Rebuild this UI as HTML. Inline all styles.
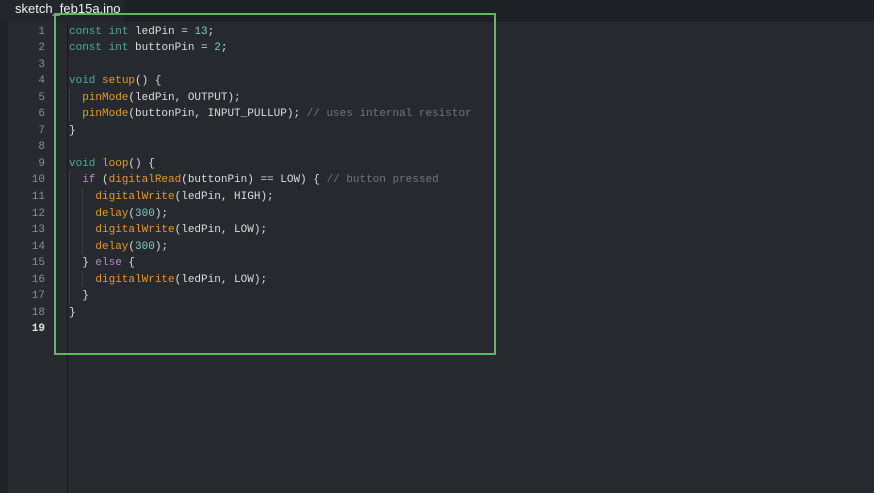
<!DOCTYPE html>
<html><head><meta charset="utf-8"><style>
html,body{margin:0;padding:0;width:874px;height:493px;overflow:hidden;background:#262a2e;}
.top{position:absolute;left:0;top:0;width:874px;height:22px;background:#1d2024;}
.tab{position:absolute;left:0;top:0;width:124px;height:22px;background:#23272b;color:#f0f0f0;font:13px "Liberation Sans",sans-serif;line-height:18px;padding-left:15px;box-sizing:border-box;}
.strip{position:absolute;left:0;top:22px;width:8px;height:471px;background:#202427;}
.gutter{position:absolute;left:8px;top:22px;width:59px;height:471px;background:#272b2f;}
.div{position:absolute;left:67px;top:22px;width:1px;height:471px;background:#17191c;}
.nums{position:absolute;left:8px;top:23px;width:37px;text-align:right;font:11px "Liberation Mono",monospace;color:#8a8f95;}
.code{position:absolute;left:69px;top:23px;font:11px "Liberation Mono",monospace;color:#dcdcdc;}
.l{height:16.55px;line-height:16.55px;white-space:pre;}
.nums .l:first-child,.code .l:first-child{margin-top:0.5px}
.k{color:#4fa8a3}.f{color:#e8972b}.n{color:#7fcbc4}.p{color:#b88ac4}.c{color:#6f767d}
.box{position:absolute;left:54px;top:13px;width:442px;height:342px;border:2.5px solid #5fb760;box-sizing:border-box;}
.guide{position:absolute;width:1px;background:#3a3f44;}
</style></head><body>
<div class="top"></div><div class="tab">sketch_feb15a.ino</div>
<div class="strip"></div><div class="gutter"></div><div class="div"></div>
<div class="guide" style="left:69px;top:89px;height:33px"></div>
<div class="guide" style="left:69px;top:171px;height:133px"></div>
<div class="guide" style="left:82px;top:188px;height:66px"></div>
<div class="guide" style="left:82px;top:271px;height:16px"></div>
<div class="nums"><div class="l">1</div><div class="l">2</div><div class="l">3</div><div class="l">4</div><div class="l">5</div><div class="l">6</div><div class="l">7</div><div class="l">8</div><div class="l">9</div><div class="l">10</div><div class="l">11</div><div class="l">12</div><div class="l">13</div><div class="l">14</div><div class="l">15</div><div class="l">16</div><div class="l">17</div><div class="l">18</div><div class="l" style="color:#e0e0e0;font-weight:bold">19</div></div>
<div class="code"><div class="l"><span class="k">const</span> <span class="k">int</span> ledPin = <span class="n">13</span>;</div><div class="l"><span class="k">const</span> <span class="k">int</span> buttonPin = <span class="n">2</span>;</div><div class="l"> </div><div class="l"><span class="k">void</span> <span class="f">setup</span>() {</div><div class="l">  <span class="f">pinMode</span>(ledPin, OUTPUT);</div><div class="l">  <span class="f">pinMode</span>(buttonPin, INPUT_PULLUP); <span class="c">// uses internal resistor</span></div><div class="l">}</div><div class="l"> </div><div class="l"><span class="k">void</span> <span class="f">loop</span>() {</div><div class="l">  <span class="p">if</span> (<span class="f">digitalRead</span>(buttonPin) == LOW) { <span class="c">// button pressed</span></div><div class="l">    <span class="f">digitalWrite</span>(ledPin, HIGH);</div><div class="l">    <span class="f">delay</span>(<span class="n">300</span>);</div><div class="l">    <span class="f">digitalWrite</span>(ledPin, LOW);</div><div class="l">    <span class="f">delay</span>(<span class="n">300</span>);</div><div class="l">  } <span class="p">else</span> {</div><div class="l">    <span class="f">digitalWrite</span>(ledPin, LOW);</div><div class="l">  }</div><div class="l">}</div><div class="l"> </div></div>
<div class="box"></div>
</body></html>
